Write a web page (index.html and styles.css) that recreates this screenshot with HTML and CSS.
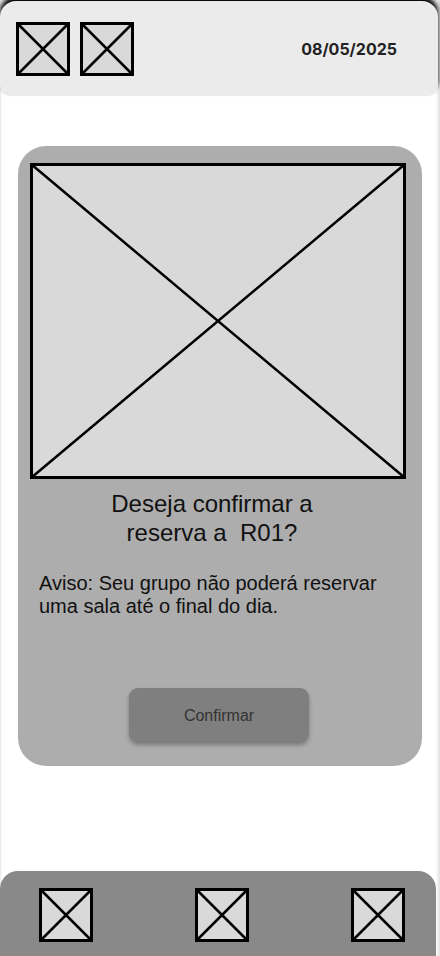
FILE: index.html
```html
<!DOCTYPE html>
<html lang="pt">
<head>
<meta charset="utf-8">
<link rel="stylesheet" href="styles.css">
</head>
<body>
<div class="screen">
  <header class="topbar">
    <div class="top-icons">
      <svg class="ph ph-s" viewBox="0 0 54 54"><rect x="1.5" y="1.5" width="51" height="51" fill="#d9d9d9" stroke="#000" stroke-width="3"/><path d="M1.5 1.5L52.5 52.5M52.5 1.5L1.5 52.5" stroke="#000" stroke-width="2.5"/></svg>
      <svg class="ph ph-s" viewBox="0 0 54 54"><rect x="1.5" y="1.5" width="51" height="51" fill="#d9d9d9" stroke="#000" stroke-width="3"/><path d="M1.5 1.5L52.5 52.5M52.5 1.5L1.5 52.5" stroke="#000" stroke-width="2.5"/></svg>
    </div>
    <span class="date">08/05/2025</span>
  </header>

  <main class="content">
    <section class="card">
      <svg class="hero" viewBox="0 0 376 316" preserveAspectRatio="none"><rect x="1.5" y="1.5" width="373" height="313" fill="#d9d9d9" stroke="#000" stroke-width="3"/><path d="M1.5 1.5L374.5 314.5M374.5 1.5L1.5 314.5" stroke="#000" stroke-width="2.5"/></svg>
      <h1 class="title">Deseja confirmar a<br>reserva a&nbsp; R01?</h1>
      <p class="notice">Aviso: Seu grupo não poderá reservar uma sala até o final do dia.</p>
      <button class="confirm">Confirmar</button>
    </section>
  </main>

  <nav class="bottombar">
    <svg class="ph" viewBox="0 0 54 54"><rect x="1.5" y="1.5" width="51" height="51" fill="#d9d9d9" stroke="#000" stroke-width="3"/><path d="M1.5 1.5L52.5 52.5M52.5 1.5L1.5 52.5" stroke="#000" stroke-width="2.5"/></svg>
    <svg class="ph" viewBox="0 0 54 54"><rect x="1.5" y="1.5" width="51" height="51" fill="#d9d9d9" stroke="#000" stroke-width="3"/><path d="M1.5 1.5L52.5 52.5M52.5 1.5L1.5 52.5" stroke="#000" stroke-width="2.5"/></svg>
    <svg class="ph" viewBox="0 0 54 54"><rect x="1.5" y="1.5" width="51" height="51" fill="#d9d9d9" stroke="#000" stroke-width="3"/><path d="M1.5 1.5L52.5 52.5M52.5 1.5L1.5 52.5" stroke="#000" stroke-width="2.5"/></svg>
  </nav>
</div>
</body>
</html>
```
FILE: styles.css
```css
html, body {
  margin: 0;
  padding: 0;
  background: #fff;
}
body {
  font-family: "Liberation Sans", Arial, sans-serif;
  overflow: hidden;
}
.screen {
  width: 440px;
  height: 956px;
  display: flex;
  flex-direction: column;
  position: relative;
  background: #fff;
  box-shadow: inset 2px 0 2px -1px #e6e6e6, inset -3px 0 3px -1px #e0e0e0;
  overflow: hidden;
}
.topbar {
  margin-top: 1px;
  margin-right: 2px;
  height: 95px;
  flex: none;
  background: #ebebeb;
  border-radius: 16px 16px 10px 10px;
  box-shadow: 0 -5px 5px #000;
  display: flex;
  align-items: center;
  justify-content: space-between;
  padding: 0 41px 0 16px;
  box-sizing: border-box;
}
.top-icons {
  display: flex;
  gap: 10px;
  padding-top: 1px;
}
.ph {
  width: 54px;
  height: 54px;
  display: block;
}
.date {
  font-family: Inter, "Liberation Sans", sans-serif;
  font-weight: 700;
  font-size: 16px;
  color: #222;
}
.content {
  flex: 1;
  padding: 50px 18px 0 18px;
}
.card {
  height: 620px;
  box-sizing: border-box;
  background: #adadad;
  border-radius: 28px;
  padding: 17px 16px 0 12px;
  display: flex;
  flex-direction: column;
  align-items: stretch;
}
.hero {
  width: 376px;
  height: 316px;
  display: block;
}
.title {
  margin: 10px 0 0 0;
  padding-right: 12px;
  font-weight: 400;
  font-size: 24px;
  line-height: 29px;
  color: #111;
  text-align: center;
}
.notice {
  margin: 25px 0 0 9px;
  font-size: 20px;
  line-height: 23px;
  color: #111;
}
.confirm {
  align-self: flex-start;
  margin: 70px 0 0 99px;
  width: 180px;
  height: 54px;
  border: none;
  border-radius: 9px;
  background: #7f7f7f;
  box-shadow: 0 3px 4px rgba(0,0,0,0.3);
  font-family: "Liberation Sans", Arial, sans-serif;
  font-size: 16px;
  color: #333;
  padding-top: 3px;
}
.bottombar {
  flex: none;
  height: 85px;
  margin-right: 4px;
  background: #898989;
  border-radius: 18px 18px 0 0;
  display: flex;
  align-items: flex-start;
  justify-content: space-between;
  padding: 17px 31px 0 39px;
  box-sizing: border-box;
}
```
